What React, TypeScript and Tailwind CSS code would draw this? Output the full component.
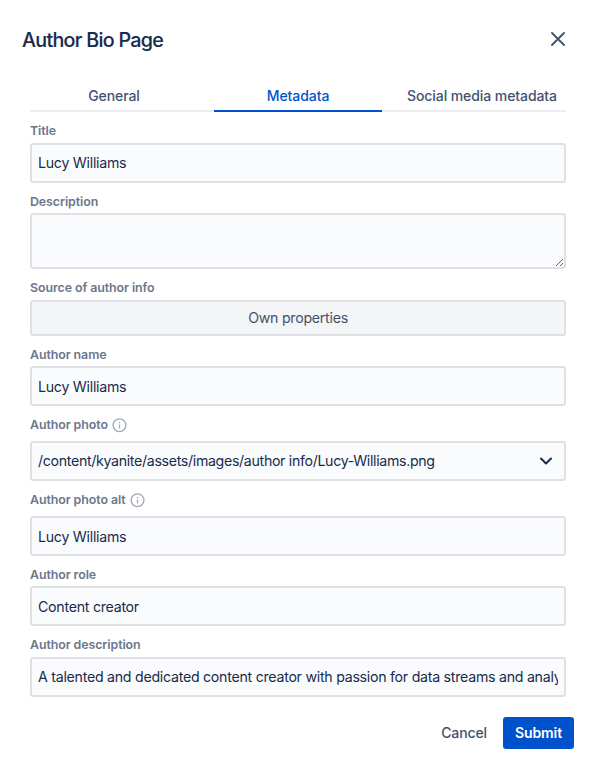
import type { ReactNode } from "react";

const box =
  "w-full rounded-[3px] border-2 border-[#DFE1E6] bg-[#FAFBFC] px-1.5 text-[14.2px] text-[#172B4D] outline-none";

function InfoIcon() {
  return (
    <svg className="size-[15px] shrink-0" viewBox="0 0 15 15" fill="none" stroke="#A0A9B9">
      <circle cx="7.5" cy="7.3" r="6.4" strokeWidth="1.3" />
      <path d="M7.5 6.5v4" strokeWidth="1.3" />
      <path d="M7.5 4v1.3" strokeWidth="1.4" />
    </svg>
  );
}

interface FieldProps {
  label: string;
  row: string;
  info?: boolean;
  children: ReactNode;
}

function Field({ label, row, info, children }: FieldProps) {
  return (
    <div className="flex flex-col">
      <div className={`flex items-end text-[12.4px] font-semibold tracking-[-0.08px] text-[#6B778C] ${row}`}>
        <div className="flex h-4 items-center gap-1">
          <span className="whitespace-nowrap leading-4">{label}</span>
          {info && <InfoIcon />}
        </div>
      </div>
      {children}
    </div>
  );
}

function TextInput({ value, raised }: { value: string; raised?: boolean }) {
  return <input className={`${box} h-10 tracking-[-0.27px] ${raised ? "pb-px" : ""}`} defaultValue={value} />;
}

export default function App() {
  return (
    <div className="h-[780px] w-[596px] overflow-hidden bg-white font-['Inter','Liberation_Sans',sans-serif]">
      <header className="flex h-20 items-center justify-between pl-[22px] pr-[30px]">
        <h1 className="pt-0.5 text-[19.7px] font-medium tracking-[-0.7px] text-[#172B4D] [-webkit-text-stroke:0.12px_#172B4D]">Author Bio Page</h1>
        <button aria-label="Close" className="pb-0.5 text-[#42526E]">
          <svg className="size-4" viewBox="0 0 16 16" fill="none" stroke="currentColor" strokeWidth="1.9" strokeLinecap="round">
            <path d="M2 2l12 12M14 2L2 14" />
          </svg>
        </button>
      </header>
      <main className="ml-[30px] w-[536px]">
        <nav className="flex h-8 text-[14px] font-medium tracking-[-0.08px] text-[#42526E]">
          <div className="flex w-[184px] items-center justify-center border-b-2 border-[#EBECF0] pr-4">General</div>
          <div className="flex w-[168px] items-center justify-center border-b-2 border-[#0052CC] text-[#0052CC]">Metadata</div>
          <div className="flex w-[184px] items-center justify-center whitespace-nowrap border-b-2 border-[#EBECF0] pl-4">Social media metadata</div>
        </nav>
        <Field label="Title" row="h-[31px] pb-1"><TextInput value="Lucy Williams" raised /></Field>
        <Field label="Description" row="h-[30px] pb-[3px]">
          <textarea className={`${box} h-14 resize-y`} />
        </Field>
        <Field label="Source of author info" row="h-[31px] pb-1">
          <button className="h-9 w-full rounded-[3px] border-2 border-[#DFE1E6] bg-[#F4F5F7] text-[14.2px] tracking-[-0.27px] text-[#42526E]">Own properties</button>
        </Field>
        <Field label="Author name" row="h-[30px] pb-[3px]"><TextInput value="Lucy Williams" /></Field>
        <Field label="Author photo" row="h-[35px] pb-2" info>
          <div className={`${box} flex h-10 items-center justify-between pr-2.5 tracking-[-0.33px]`}>
            <span>/content/kyanite/assets/images/author info/Lucy-Williams.png</span>
            <svg className="size-4" viewBox="0 0 16 16" fill="none" stroke="#172B4D" strokeWidth="2" strokeLinecap="round" strokeLinejoin="round">
              <path d="M3 5.5l5 5 5-5" />
            </svg>
          </div>
        </Field>
        <Field label="Author photo alt" row="h-[35px] pb-2" info><TextInput value="Lucy Williams" /></Field>
        <Field label="Author role" row="h-[30px] pb-[3px]"><TextInput value="Content creator" /></Field>
        <Field label="Author description" row="h-[31px] pb-1">
          <TextInput value="A talented and dedicated content creator with passion for data streams and analytics" raised />
        </Field>
      </main>
      <footer className="mt-5 flex h-8 justify-end gap-4 pr-[22px] text-[14px] font-medium">
        <button className="pb-0.5 tracking-[-0.1px] text-[#42526E]">Cancel</button>
        <button className="w-[71px] rounded-[3px] bg-[#0052CC] pb-0.5 font-semibold tracking-[-0.1px] text-white">Submit</button>
      </footer>
    </div>
  );
}
